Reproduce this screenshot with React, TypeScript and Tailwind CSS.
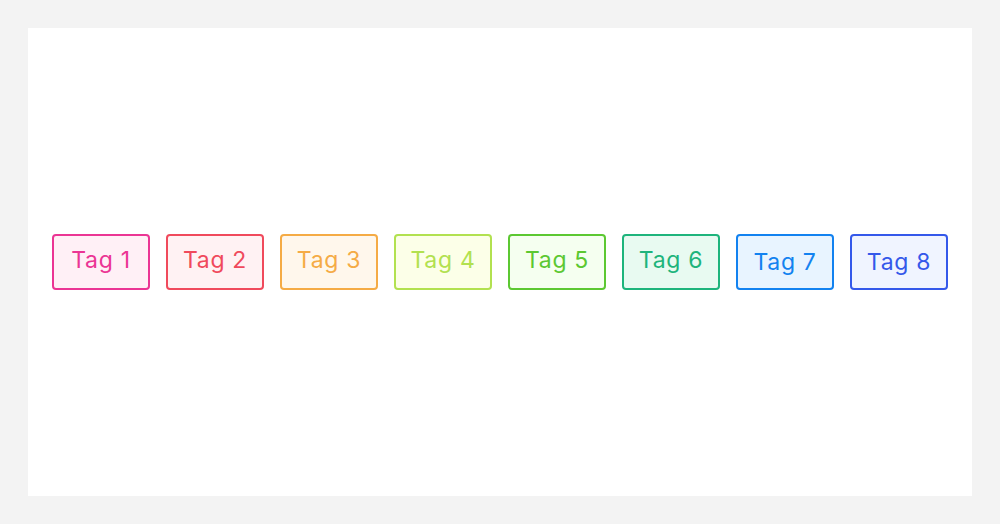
import React from "react";

const tags = [
  { label: "Tag 1", cls: "border-[#eb3594] text-[#eb3594] bg-[#fff0f6] pb-[4px]" },
  { label: "Tag 2", cls: "border-[#f04a5c] text-[#f04a5c] bg-[#fff2f3] pb-[4px]" },
  { label: "Tag 3", cls: "border-[#f5ab45] text-[#f5ab45] bg-[#fff7ec] pb-[4px]" },
  { label: "Tag 4", cls: "border-[#b2e150] text-[#b2e150] bg-[#fcffe8] pb-[4px]" },
  { label: "Tag 5", cls: "border-[#5cc832] text-[#5cc832] bg-[#f5fff0] pb-[4px]" },
  { label: "Tag 6", cls: "border-[#1eb47c] text-[#1eb47c] bg-[#e8faf1] pb-[4px]" },
  { label: "Tag 7", cls: "border-[#1282f0] text-[#1282f0] bg-[#e8f4ff]" },
  { label: "Tag 8", cls: "border-[#3458ea] text-[#3458ea] bg-[#f0f4ff]" },
];

const App = () => {
  return (
    <div className="w-[1000px] h-[524px] bg-[#f3f3f3] p-[28px]">
      <div className="h-full bg-white flex items-center justify-center gap-4">
        {tags.map((t) => (
          <div
            key={t.label}
            className={`w-[98px] h-[56px] border-2 rounded-[4px] flex items-center justify-center text-[23px] font-normal tracking-[0.03em] font-['Inter',sans-serif] ${t.cls}`}
          >
            {t.label}
          </div>
        ))}
      </div>
    </div>
  );
};

export default App;
